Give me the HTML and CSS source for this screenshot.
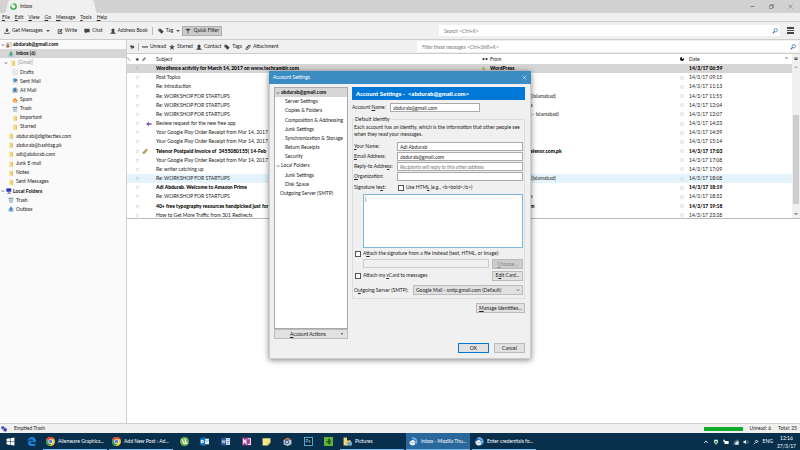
FILE: index.html
```
<!DOCTYPE html>
<html lang="en">
<head>
    <meta charset="utf-8">
    <title>Inbox</title>
    <link rel="stylesheet" href="styles.css">
</head>
<body>
    <svg class="defs">
        <symbol id="folder" viewBox="0 0 12 16"><path d="M1 2h7l1 1h2v12H1z" fill="#f3d67c"/><path d="M1 2h3v13H1z" fill="#fae9ae"/><path d="M9 3h2v12H9z" fill="#dcb95c"/></symbol>
        <symbol id="search" viewBox="0 0 16 16"><circle cx="10" cy="6" r="4.500" fill="none" stroke="#3f74b5" stroke-width="2"/><path d="M7 9l-5 5" stroke="#3f74b5" stroke-width="3"/></symbol>
        <symbol id="trash" viewBox="0 0 16 16"><path d="M3 4h10l-1 11H4z" fill="#cfdde6" stroke="#8195a3"/><path d="M2 2h12v3H2z" fill="#6f98ba"/><path d="M6 7l4 5m0-5l-4 5" stroke="#4d8fc0"/></symbol>
        <symbol id="person" viewBox="0 0 16 16"><path d="M8 1c3 0 4 2 4 5s-1 3-1 5l4 2v2H1v-2l4-2c0-2-1-2-1-5s1-5 4-5z" fill="#444"/></symbol>
        <symbol id="tag" viewBox="0 0 16 16"><path d="M1 2h6l8 7-5 6-9-8z" fill="#444"/><circle cx="4" cy="5" r="1" fill="#fff"/></symbol>
        <symbol id="clip" viewBox="0 0 16 16"><path d="M5 11l6-7c2-2 4 0 3 2l-7 8c-3 3-6 0-4-3l7-8" fill="none" stroke="currentColor" stroke-width="2"/></symbol>
        <symbol id="chrome" viewBox="0 0 16 16"><circle cx="8" cy="8" r="8" fill="#f6c92c"/><path d="M1 4a8 8 0 0 1 14 0H8L5 10z" fill="#de4b3c"/><path d="M1 4l4 7 4 1-2 4A8 8 0 0 1 1 4z" fill="#2f9e55"/><circle cx="8" cy="8" r="4" fill="#fff"/><circle cx="8" cy="8" r="3" fill="#3f82e8"/></symbol>
        <symbol id="thunderbird" viewBox="0 0 16 16"><circle cx="8" cy="8" r="7.500" fill="#2366ad"/><path d="M4 1c6-2 12 3 11 9l-3 4c2-5 0-9-5-10z" fill="#67a9dd"/><path d="M1 8l6-3 5 4-2 5-5 1-4-3z" fill="#f1f4f7"/><path d="M2 9l5 2 4-2" stroke="#7c8e9e" fill="none"/></symbol>
    </svg>

    <header class="titlebar">
        <div class="tab">
            <svg class="icon" viewBox="0 0 16 16"><circle cx="8" cy="8" r="6" fill="none" stroke="#b7e3b7" stroke-width="3"/><path d="M8 2a6 6 0 1 1-6 6" fill="none" stroke="#2fae3a" stroke-width="3"/></svg>
            <span>Inbox</span>
        </div>
        <div class="window-buttons">
            <button aria-label="Minimize"><svg viewBox="0 0 10 10"><path d="M1 5h8" stroke="#333"/></svg></button>
            <button aria-label="Restore"><svg viewBox="0 0 10 10"><path d="M1 3h6v6H1zM3 3V1h6v6H7" fill="none" stroke="#555"/></svg></button>
            <button aria-label="Close"><svg viewBox="0 0 10 10"><path d="M1 1l8 8M9 1L1 9" stroke="#555"/></svg></button>
        </div>
    </header>

    <nav class="menubar">
        <a href="#"><u>F</u>ile</a>
        <a href="#"><u>E</u>dit</a>
        <a href="#"><u>V</u>iew</a>
        <a href="#"><u>G</u>o</a>
        <a href="#"><u>M</u>essage</a>
        <a href="#"><u>T</u>ools</a>
        <a href="#"><u>H</u>elp</a>
    </nav>

    <div class="toolbar">
        <button><svg class="icon" viewBox="0 0 16 16"><path d="M6 1h4v5h3l-5 5-5-5h3zM1 11h2v2h10v-2h2v4H1z" fill="#444"/></svg>Get Messages</button>
        <button class="drop" aria-label="Get messages menu"></button>
        <button><svg class="icon" viewBox="0 0 16 16"><path d="M2 3h7v2H4v8h8V9h2v6H2zM6 9l6-7 3 2-6 7-4 1z" fill="#444"/></svg>Write</button>
        <button><svg class="icon" viewBox="0 0 16 16"><path d="M1 2h14v9H8l-4 4v-4H1z" fill="#444"/></svg>Chat</button>
        <button><svg class="icon"><use href="#person"/></svg>Address Book</button>
        <span class="divider"></span>
        <button><svg class="icon"><use href="#tag"/></svg>Tag</button>
        <button class="drop" aria-label="Tag menu"></button>
        <button class="pressed"><svg class="icon" viewBox="0 0 16 16"><path d="M2 2h12v2L9 8v7H7V8L2 4z" fill="#444"/></svg>Quick Filter</button>
        <label class="search global">
            <input type="text" aria-label="Search" placeholder="Search &lt;Ctrl+K&gt;">
            <svg class="icon"><use href="#search"/></svg>
        </label>
        <button class="burger" aria-label="Menu"></button>
    </div>

    <main class="main">
        <aside class="sidebar">
            <ul class="folders">
                <li class="account"><svg class="chev" viewBox="0 0 8 8"><path d="M1 2l3 4 3-4"/></svg><svg class="icon" viewBox="0 0 16 16"><path d="M3 2h12v10H3z" fill="#e3e3e3" stroke="#999"/><path d="M1 7h7v8H1z" fill="#a8792c"/><path d="M2 7c0-4 5-4 5 0" fill="none" stroke="#6b5230"/></svg>abdurab@gmail.com</li>
                <li class="sub current"><svg class="icon" viewBox="0 0 16 16"><path d="M1 9l3-4h8l3 4v6H1z" fill="#a9c5dd"/><path d="M6 1h4v6h3l-5 6-5-6h3z" fill="#37a84a"/></svg>Inbox (6)</li>
                <li class="label"><svg class="chev" viewBox="0 0 8 8"><path d="M1 2l3 4 3-4"/></svg><svg class="icon"><use href="#folder"/></svg><em>[Gmail]</em></li>
                <li class="deep"><svg class="icon" viewBox="0 0 16 16"><path d="M3 1h7l3 3v11H3z" fill="#fff" stroke="#999"/><path d="M5 7h6M5 10h6" stroke="#aaa"/></svg>Drafts</li>
                <li class="deep"><svg class="icon" viewBox="0 0 16 16"><path d="M1 3h14v12H1z" fill="#d6dfe8"/><path d="M3 1h9l3 6-9 5z" fill="#4b8dc7"/></svg>Sent Mail</li>
                <li class="deep"><svg class="icon" viewBox="0 0 16 16"><path d="M1 5l4-4h7l3 5v9H1z" fill="#9ab3c6"/><path d="M5 3h5l2 6-5 4-3-4z" fill="#3a7db8"/></svg>All Mail</li>
                <li class="deep"><svg class="icon" viewBox="0 0 16 16"><path d="M8 1c1 3 6 4 6 9s-3 5-6 5-6-1-6-5c0-3 2-4 3-6l1 2z" fill="#ee8a2c"/><path d="M6 8h4v5H6z" fill="#fbd28c"/></svg>Spam</li>
                <li class="deep"><svg class="icon"><use href="#trash"/></svg>Trash</li>
                <li class="deep"><svg class="icon"><use href="#folder"/></svg>Important</li>
                <li class="deep"><svg class="icon"><use href="#folder"/></svg>Starred</li>
                <li class="sub"><svg class="icon"><use href="#folder"/></svg>abdurab@digitecties.com</li>
                <li class="sub"><svg class="icon"><use href="#folder"/></svg>abdurab@hashtag.pk</li>
                <li class="sub"><svg class="icon"><use href="#folder"/></svg>adi@abdurab.com</li>
                <li class="sub"><svg class="icon"><use href="#folder"/></svg>Junk E-mail</li>
                <li class="sub"><svg class="icon"><use href="#folder"/></svg>Notes</li>
                <li class="sub"><svg class="icon"><use href="#folder"/></svg>Sent Messages</li>
                <li class="account"><svg class="chev" viewBox="0 0 8 8"><path d="M1 2l3 4 3-4"/></svg><svg class="icon" viewBox="0 0 16 16"><path d="M1 1h13v9H1z" fill="#2638b4"/><path d="M6 10h4v3h3v2H3v-2h3z" fill="#7480a0"/></svg>Local Folders</li>
                <li class="sub"><svg class="icon"><use href="#trash"/></svg>Trash</li>
                <li class="sub"><svg class="icon" viewBox="0 0 16 16"><path d="M1 9l3-4h8l3 4v6H1z" fill="#a9bdd0"/><path d="M8 1l5 6h-3v6H6V7H3z" fill="#3b7fc4"/></svg>Outbox</li>
            </ul>
        </aside>

        <section class="messages">
            <div class="filterbar">
                <button aria-label="Keep filters"><svg class="icon" viewBox="0 0 16 16"><path d="M4 1l5 4 4-1 1 7-4-1-3 5-1-6-5-3 4-1z" fill="#444"/></svg></button>
                <span class="divider"></span>
                <button><svg class="icon" viewBox="0 0 16 16"><path d="M0 6h6l2 1 2-1h6v3h-5l-3 1-3-1H0z" fill="#555"/></svg>Unread</button>
                <button><svg class="icon" viewBox="0 0 16 16"><path d="M8 0l2 6h6l-5 4 2 6-5-4-5 4 2-6-5-4h6z" fill="#444"/></svg>Starred</button>
                <button><svg class="icon"><use href="#person"/></svg>Contact</button>
                <button><svg class="icon"><use href="#tag"/></svg>Tags</button>
                <button><svg class="icon"><use href="#clip"/></svg>Attachment</button>
                <label class="search filter">
                    <input type="text" aria-label="Filter messages" placeholder="Filter these messages &lt;Ctrl+Shift+K&gt;">
                    <svg class="icon"><use href="#search"/></svg>
                </label>
            </div>

            <div class="list">
                <table>
                    <colgroup><col class="c-thread"><col class="c-star"><col class="c-clip"><col class="c-subject"><col class="c-junk"><col class="c-from"><col class="c-read"><col class="c-date"></colgroup>
                    <thead>
                        <tr><th><svg class="small" viewBox="0 0 8 8"><path d="M1 1l2 3 4 3" fill="none" stroke="#333"/></svg></th><th>★</th><th><svg class="small"><use href="#clip"/></svg></th><th>Subject</th><th>••</th><th>From</th><th><svg class="small" viewBox="0 0 8 8"><circle cx="4" cy="4" r="4" fill="#111"/><path d="M4 4V0h4v2z" fill="#fff"/></svg></th><th>Date <span class="sort">^</span></th></tr>
                    </thead>
                    <tbody>
                        <tr class="unread selected"><td></td><td>☆</td><td></td><td>Wordfence activity for March 14, 2017 on www.techrambir.com</td><td><i class="junk"></i></td><td>WordPress</td><td></td><td>14/3/17 06:59</td></tr>
                        <tr><td></td><td>☆</td><td></td><td>Post Topics</td><td></td><td></td><td><i class="dot"></i></td><td>14/3/17 09:15</td></tr>
                        <tr><td></td><td>☆</td><td></td><td>Re: introduction</td><td></td><td></td><td><i class="dot"></i></td><td>14/3/17 11:13</td></tr>
                        <tr><td></td><td>☆</td><td></td><td>Re: WORKSHOP FOR STARTUPS</td><td></td><td>Startup Workshop (Islamabad)</td><td><i class="dot"></i></td><td>14/3/17 11:55</td></tr>
                        <tr><td></td><td>☆</td><td></td><td>Re: WORKSHOP FOR STARTUPS</td><td></td><td>Workshop Sessions</td><td><i class="dot"></i></td><td>14/3/17 12:04</td></tr>
                        <tr><td></td><td>☆</td><td></td><td>Re: WORKSHOP FOR STARTUPS</td><td></td><td>(Startup Workshop - Islamabad)</td><td><i class="dot"></i></td><td>14/3/17 12:07</td></tr>
                        <tr><td></td><td>☆</td><td><svg class="icon reply" viewBox="0 0 16 16"><path d="M0 8l8-6v4h7v4H8v4z" fill="#7b57b8"/></svg></td><td>Review request for the new free app</td><td></td><td></td><td><i class="dot"></i></td><td>14/3/17 14:23</td></tr>
                        <tr><td></td><td>☆</td><td></td><td>Your Google Play Order Receipt from Mar 14, 2017</td><td></td><td></td><td><i class="dot"></i></td><td>14/3/17 14:39</td></tr>
                        <tr><td></td><td>☆</td><td></td><td>Your Google Play Order Receipt from Mar 14, 2017</td><td></td><td></td><td><i class="dot"></i></td><td>14/3/17 15:14</td></tr>
                        <tr class="unread"><td></td><td>☆</td><td><svg class="icon gold" viewBox="0 0 16 16"><path d="M4 11l6-7c2-2 5 0 3 3l-6 7c-3 2-6 0-4-3z" fill="#d9bd74" stroke="#94702a" stroke-width="2"/></svg></td><td>Telenor Postpaid Invoice of&nbsp; 3455080155( 14-Feb</td><td></td><td>postpaid@billing.telenor.com.pk</td><td><i class="dot"></i></td><td>14/3/17 17:03</td></tr>
                        <tr><td></td><td>☆</td><td></td><td>Your Google Play Order Receipt from Mar 14, 2017</td><td></td><td></td><td><i class="dot"></i></td><td>14/3/17 17:08</td></tr>
                        <tr><td></td><td>☆</td><td></td><td>Re: writer catching up</td><td></td><td></td><td><i class="dot"></i></td><td>14/3/17 17:09</td></tr>
                        <tr class="hover"><td></td><td>☆</td><td></td><td>Re: WORKSHOP FOR STARTUPS</td><td></td><td>Startup Workshop (Islamabad)</td><td><i class="dot"></i></td><td>14/3/17 18:08</td></tr>
                        <tr class="unread"><td></td><td>☆</td><td></td><td>Adi Abdurab. Welcome to Amazon Prime</td><td></td><td></td><td><i class="dot"></i></td><td>14/3/17 18:19</td></tr>
                        <tr><td></td><td>☆</td><td></td><td>Re: WORKSHOP FOR STARTUPS</td><td></td><td>Workshop Sessions</td><td><i class="dot"></i></td><td>14/3/17 18:32</td></tr>
                        <tr class="unread"><td></td><td>☆</td><td></td><td>40+ free typography resources handpicked just for you</td><td></td><td>Creative Newsroom</td><td><i class="dot"></i></td><td>14/3/17 19:18</td></tr>
                        <tr><td></td><td>☆</td><td></td><td>How to Get More Traffic from 301 Redirects</td><td></td><td></td><td><i class="dot"></i></td><td>14/3/17 23:28</td></tr>
                    </tbody>
                </table>
                <div class="scroll">
                    <svg class="small" viewBox="0 0 8 8"><path d="M1 1h6v5H1z" fill="#444"/><path d="M2 3h4v1H2z" fill="#fff"/></svg>
                    <svg class="small" viewBox="0 0 8 8"><path d="M1 6l3-3 3 3" fill="none" stroke="#444"/></svg>
                    <span class="thumb"></span>
                    <svg class="small" viewBox="0 0 8 8"><path d="M1 2l3 3 3-3" fill="none" stroke="#444" stroke-width="2"/></svg>
                </div>
            </div>
        </section>

        <form class="dialog">
            <div class="dialog-title">
                <span>Account Settings</span>
                <button type="button" aria-label="Close dialog"><svg viewBox="0 0 10 10"><path d="M1 1l8 8M9 1L1 9" stroke="#fff"/></svg></button>
            </div>
            <div class="dialog-body">
                <div class="side">
                    <ul class="tree">
                        <li class="root current"><svg class="chev" viewBox="0 0 8 8"><path d="M1 2l3 4 3-4"/></svg>abdurab@gmail.com</li>
                        <li>Server Settings</li>
                        <li>Copies &amp; Folders</li>
                        <li>Composition &amp; Addressing</li>
                        <li>Junk Settings</li>
                        <li>Synchronization &amp; Storage</li>
                        <li>Return Receipts</li>
                        <li>Security</li>
                        <li class="root"><svg class="chev" viewBox="0 0 8 8"><path d="M1 2l3 4 3-4"/></svg>Local Folders</li>
                        <li>Junk Settings</li>
                        <li>Disk Space</li>
                        <li class="server">Outgoing Server (SMTP)</li>
                    </ul>
                    <button type="button" class="btn actions"><span><u>A</u>ccount Actions</span><i class="caret"></i></button>
                </div>
                <div class="settings">
                    <h1>Account Settings -&nbsp; &lt;abdurab@gmail.com&gt;</h1>
                    <div class="account-name">
                        <label for="account">Account <u>N</u>ame:</label>
                        <input type="text" id="account" value="abdurab@gmail.com">
                    </div>
                    <fieldset>
                        <legend>Default Identity</legend>
                        <p>Each account has an identity, which is the information that other people see when they read your messages.</p>
                        <div class="fields">
                            <label for="name"><u>Y</u>our Name:</label>
                            <input type="text" id="name" value="Adi Abdurab">
                            <label for="email"><u>E</u>mail Address:</label>
                            <input type="text" id="email" value="abdurab@gmail.com">
                            <label for="reply">Reply-to Addre<u>s</u>s:</label>
                            <input type="text" id="reply" placeholder="Recipients will reply to this other address">
                            <label for="org"><u>O</u>rganization:</label>
                            <input type="text" id="org">
                        </div>
                        <div class="signature-head">
                            <label for="signature">Signature te<u>x</u>t:</label>
                            <input type="checkbox" id="html">
                            <label for="html">Use HTM<u>L</u> (e.g., &lt;b&gt;bold&lt;/b&gt;)</label>
                        </div>
                        <textarea id="signature">|</textarea>
                        <div class="check">
                            <input type="checkbox" id="attach">
                            <label for="attach">A<u>t</u>tach the signature from a file instead (text, HTML, or image):</label>
                        </div>
                        <div class="file">
                            <input type="text" aria-label="Signature file" disabled>
                            <button type="button" class="btn" disabled><u>C</u>hoose...</button>
                        </div>
                        <div class="check vcard">
                            <input type="checkbox" id="vcard">
                            <label for="vcard">Attach my <u>v</u>Card to messages</label>
                            <button type="button" class="btn">E<u>d</u>it Card...</button>
                        </div>
                        <div class="smtp">
                            <label for="smtp">O<u>u</u>tgoing Server (SMTP):</label>
                            <div class="select">
                                <select id="smtp"><option>Google Mail - smtp.gmail.com (Default)</option></select>
                                <svg class="chev" viewBox="0 0 8 8"><path d="M1 2l3 4 3-4"/></svg>
                            </div>
                        </div>
                    </fieldset>
                    <button type="button" class="btn manage"><u>M</u>anage Identities...</button>
                </div>
            </div>
            <div class="dialog-buttons">
                <button type="button" class="btn ok">OK</button>
                <button type="button" class="btn">Cancel</button>
            </div>
        </form>
    </main>

    <footer class="status">
        <svg class="icon" viewBox="0 0 16 16"><path d="M1 1h8v6H1zM7 6h8v7H7z" fill="#2b3fae"/><path d="M3 8h3v2H3zM9 14h5v2H9z" fill="#6b7490"/></svg>
        <span>Emptied Trash</span>
        <span class="progress"></span>
        <span>Unread: 6</span>
        <span>Total: 25</span>
    </footer>

    <div class="taskbar">
        <button class="app" aria-label="Start"><svg viewBox="0 0 16 16"><path d="M1 3l6-1v6H1zM8 2l7-1v7H8zM1 9h6v5l-6-1zM8 9h7v6l-7-1z" fill="#fff"/></svg></button>
        <button class="app" aria-label="Edge"><svg viewBox="0 0 16 16"><path d="M1 8c0-5 4-8 8-8s7 3 7 9H6c0 4 6 4 9 2v4C8 18 1 15 2 10c1-3 3-4 5-5-1 1-1 2-1 2h5c0-4-7-4-10 1z" fill="#1d84dd"/></svg></button>
        <button class="task"><svg><use href="#chrome"/></svg>Alienware Graphics...</button>
        <button class="task"><svg><use href="#chrome"/></svg>Add New Post ‹ Ad...</button>
        <div class="apps">
            <button class="app" aria-label="Torrents"><svg viewBox="0 0 16 16"><circle cx="8" cy="8" r="8" fill="#73b34b"/><path d="M4 4l2 6c1 2 3 2 4 0L9 3M10 9l3 3" fill="none" stroke="#fff" stroke-width="2"/></svg></button>
            <button class="app" aria-label="Outlook"><svg viewBox="0 0 16 16"><path d="M8 3h8v10H8z" fill="#e9f3fb"/><path d="M9 5l3 3 4-3" fill="none" stroke="#1272c4"/><path d="M0 2l9-2v16l-9-2z" fill="#1272c4"/><circle cx="4" cy="8" r="2" fill="none" stroke="#fff" stroke-width="2"/></svg></button>
            <button class="app" aria-label="Word"><svg viewBox="0 0 16 16"><path d="M8 2h8v12H8z" fill="#edf1f8"/><path d="M10 5h5M10 8h5M10 11h5" stroke="#2b579a"/><path d="M0 2l9-2v16l-9-2z" fill="#2b579a"/><path d="M2 5l1 6 2-5 1 5 2-6" fill="none" stroke="#fff"/></svg></button>
            <button class="app" aria-label="OneNote"><svg viewBox="0 0 16 16"><path d="M0 1h16v14H0z" fill="#98408c"/><path d="M10 3h5v10h-5" fill="none" stroke="#f0d8ee" stroke-width="2"/><path d="M3 12V5l4 6V4" fill="none" stroke="#fff" stroke-width="2"/></svg></button>
            <button class="app" aria-label="Notes"><svg viewBox="0 0 16 16"><path d="M1 2h14v8l-5 5H1z" fill="#f8e587"/><path d="M15 10l-5 5v-5z" fill="#c9b24c"/></svg></button>
            <button class="app" aria-label="Viewer"><svg viewBox="0 0 16 16"><path d="M1 5h14v8l-7 3-7-3z" fill="#b9c6d4"/><path d="M2 5c3-5 9-5 12 0z" fill="#cf6f52"/><circle cx="7" cy="9" r="4" fill="#46637e"/><circle cx="7" cy="9" r="2" fill="#dfe9f2"/></svg></button>
            <button class="app" aria-label="Photoshop"><span class="ps">Ps</span></button>
            <button class="app" aria-label="Evernote"><svg viewBox="0 0 16 16"><path d="M0 0h16v16H0z" fill="#5fb336"/><path d="M7 3c3 0 5 1 5 4 0 4-1 6-3 6-2 0-2-2-1-3-2 1-4-1-4-3h3z" fill="#2b5a20"/></svg></button>
        </div>
        <button class="task"><svg viewBox="0 0 16 16"><path d="M1 1h6v14H1z" fill="#f4d77d"/><path d="M5 6h9v9H5z" fill="#e9c765"/><path d="M8 9h8v6H8z" fill="#65a8dc"/></svg>Pictures</button>
        <button class="task active"><svg><use href="#thunderbird"/></svg>Inbox - Mozilla Thu...</button>
        <button class="task"><svg><use href="#thunderbird"/></svg>Enter credentials fo...</button>
        <div class="tray">
            <svg viewBox="0 0 16 16"><path d="M3 11l5-6 5 6" fill="none" stroke="#fff" stroke-width="2"/></svg>
            <svg viewBox="0 0 16 16"><path d="M3 2h10v7l-5 6-5-6z" fill="#e8f5ea"/><path d="M5 5h6v4l-3 4-3-4z" fill="#31a74a"/></svg>
            <svg viewBox="0 0 16 16"><path d="M4 5h11v8H4zM1 2h4v5H1z" fill="#fff"/></svg>
            <svg viewBox="0 0 16 16"><path d="M1 15A14 14 0 0 1 15 1v14z" fill="#60788a"/><path d="M6 15a9 9 0 0 1 9-9v9z" fill="#dde5ea"/></svg>
            <svg viewBox="0 0 16 16"><path d="M1 6h3l4-4v12l-4-4H1z" fill="#fff"/><path d="M10 5q3 3 0 6M12 3q5 5 0 10" fill="none" stroke="#ccd8e0"/></svg>
            <svg viewBox="0 0 16 16"><path d="M2 14l5-5M6 6l4 4 3-3-4-4zM9 3l4 4" fill="none" stroke="#fff" stroke-width="2"/></svg>
            <span>ENG</span>
            <span class="clock">12:16<br>27/3/17</span>
        </div>
    </div>
</body>
</html>
```
FILE: styles.css
```
* {
    box-sizing: border-box;
}
body {
    margin: 0;
    min-height: 100vh;
    display: flex;
    flex-direction: column;
    background: #f0f0f0;
    color: #222;
    font-family: Lato, "Open Sans", sans-serif;
    font-size: 5px;
    line-height: 7px;
}
button, input, select, textarea {
    font: inherit;
    color: inherit;
    margin: 0;
    padding: 0;
    border: 0;
    background: none;
}
button {
    display: flex;
    align-items: center;
    justify-content: center;
    white-space: nowrap;
}
ul {
    list-style: none;
    margin: 0;
    padding: 0;
}
a {
    color: inherit;
    text-decoration: none;
}
.defs {
    display: none;
}
.icon {
    width: 6px;
    height: 6px;
    flex: none;
}
.small {
    width: 4px;
    height: 4px;
    display: block;
}
.chev {
    width: 4px;
    height: 4px;
    flex: none;
    fill: none;
    stroke: #555;
}

/* title bar and menus */
.titlebar {
    height: 13px;
    background: #d2d2d2;
    display: flex;
    justify-content: space-between;
}
.tab {
    width: 94px;
    margin-left: 4px;
    padding-left: 6px;
    display: flex;
    align-items: center;
    gap: 3px;
    background: #f0f0f0;
    clip-path: polygon(0 100%, 2px 90%, 4px 12%, 6px 0, 88px 0, 90px 12%, 92px 90%, 100% 100%);
}
.tab .icon {
    width: 7px;
    height: 7px;
}
.window-buttons {
    display: flex;
}
.window-buttons button {
    width: 19px;
}
.window-buttons svg {
    width: 5px;
    height: 5px;
}
.menubar {
    height: 9px;
    padding-left: 2px;
    display: flex;
    gap: 5px;
    align-items: center;
    border-bottom: 1px solid #d0d0d0;
}
.toolbar {
    height: 18px;
    padding: 0 4px;
    display: flex;
    align-items: center;
    gap: 7px;
    border-bottom: 1px solid #ccc;
}
.toolbar button, .filterbar button {
    gap: 2px;
}
.toolbar .drop {
    border: 2px solid transparent;
    border-top-color: #555;
    border-bottom: 0;
    margin: 0 0 0 -4px;
}
.divider {
    width: 1px;
    height: 8px;
    background: #bbb;
}
.toolbar .divider {
    margin: 0 -2px 0 -3px;
}
.toolbar .pressed {
    width: 40px;
    height: 10px;
    margin-left: -5px;
    background: #cbcbcb;
    border: 1px solid #b0b0b0;
}
.search {
    display: flex;
    align-items: center;
    background: #fff;
    padding: 0 2px 0 3px;
    height: 11px;
    font-style: italic;
}
.search input {
    flex: 1;
    min-width: 0;
    outline: 0;
}
::placeholder {
    color: #777;
    opacity: 1;
}
.global {
    flex: 0 0 341px;
    margin-left: auto;
}
.toolbar .burger {
    width: 7px;
    height: 7px;
    border: solid #444;
    border-width: 2px 0;
    background: linear-gradient(#f0f0f0 1px, #444 1px 2px, #f0f0f0 2px);
    margin-right: 2px;
}

/* folders and message list */
.main {
    flex: 1;
    display: flex;
    position: relative;
}
.sidebar {
    flex: none;
    width: 126px;
    background: #fafafa;
}
.folders {
    height: 174px;
    display: grid;
    grid-auto-rows: 1fr;
}
.folders li {
    display: flex;
    align-items: center;
    gap: 2px;
    white-space: nowrap;
}
.folders .account {
    padding-left: 1px;
    font-weight: 900;
    gap: 1px;
}
.folders .sub {
    padding-left: 8px;
}
.folders .label {
    padding-left: 4px;
    color: #999;
}
.folders .deep {
    padding-left: 12px;
}
.current {
    background: #d6d6d6;
    font-weight: 900;
}
.messages {
    flex: 1;
    min-width: 0;
    border-left: 1px solid #d0d0d0;
    background: #fff;
}
.filterbar {
    height: 14px;
    padding: 0 2px;
    display: flex;
    align-items: center;
    gap: 3px;
    background: #f0f0f0;
    border-bottom: 1px solid #ccc;
}
.filter {
    flex: 0 0 381px;
    margin-left: auto;
}
.list {
    height: 165px;
    display: flex;
    overflow: hidden;
    border-bottom: 1px solid #bbb;
}
.list table {
    flex: 1;
    width: 100%;
    height: 166px;
    table-layout: fixed;
    border-collapse: collapse;
}
.c-thread { width: 5px; }
.c-star { width: 10px; }
.c-clip { width: 10px; }
.c-subject { width: 330px; }
.c-junk { width: 8px; }
.c-read { width: 9px; }
.c-date { width: 103px; }
.list th {
    height: 10px;
    padding: 0;
    text-align: left;
    font-weight: normal;
}
.list td {
    height: 9px;
    padding: 0;
    line-height: 7px;
    overflow: hidden;
    white-space: nowrap;
}
.list td:nth-child(2), .list th:nth-child(2) {
    text-align: center;
}
.list td:nth-child(2) {
    color: #999;
    font-weight: normal;
}
.list td:nth-child(4), .list th:nth-child(4) {
    padding-left: 4px;
}
.list th:last-child {
    position: relative;
}
.sort {
    position: absolute;
    right: 4px;
}
.unread {
    font-weight: 900;
    color: #000;
}
.selected {
    background: #d6d6d6;
}
.hover {
    background: #e5f3fc;
}
.gold {
    display: block;
}
.reply {
    display: block;
    margin-left: auto;
}
.junk {
    display: block;
    width: 3px;
    height: 3px;
    border-radius: 50%;
    background: #a9b84a;
}
.dot {
    display: block;
    width: 4px;
    height: 4px;
    border-radius: 50%;
    border: 1px solid #ddd;
}
.scroll {
    width: 8px;
    background: #f0f0f0;
    display: flex;
    flex-direction: column;
    align-items: center;
    padding: 3px 0 2px;
}
.scroll svg {
    flex: none;
}
.scroll svg:nth-child(2) {
    margin: 4px 0 46px;
}
.thumb {
    width: 6px;
    height: 89px;
    margin-bottom: auto;
    background: #cdcdcd;
}

/* account settings dialog */
.dialog {
    position: absolute;
    top: 31px;
    left: calc(50% - 131px);
    width: 262px;
    background: #f0f0f0;
    border: 1px solid #ccc;
    border-top: 0;
    box-shadow: 0 1px 6px rgba(0, 0, 0, 0.5);
}
.dialog-title {
    height: 13px;
    margin: 0 -1px;
    padding: 0 4px;
    display: flex;
    align-items: center;
    justify-content: space-between;
    background: #3c8cc4;
    color: #fff;
}
.dialog-title svg {
    width: 5px;
    height: 5px;
}
.dialog-body {
    display: flex;
    gap: 4px;
    padding: 3px 5px 0 4px;
}
.side {
    width: 74px;
    flex: none;
}
.tree {
    height: 242px;
    padding-bottom: 130px;
    display: grid;
    grid-auto-rows: 1fr;
    background: #fff;
    border: 1px solid #aaa;
}
.tree li {
    display: flex;
    align-items: center;
    padding-left: 10px;
    white-space: nowrap;
}
.tree .root {
    padding-left: 1px;
    gap: 1px;
}
.tree .server {
    padding-left: 5px;
}
.btn {
    height: 10px;
    padding: 0 2px;
    background: #e1e1e1;
    border: 1px solid #bbb;
}
.btn:disabled {
    background: #ccc;
    color: #888;
}
.actions {
    width: 100%;
    justify-content: space-between;
    padding-left: 15px;
    padding-right: 4px;
}
.caret {
    border: 1px solid transparent;
    border-top: 2px solid #444;
    border-bottom: 0;
}
.settings {
    flex: 1;
    min-width: 0;
    display: flex;
    flex-direction: column;
}
.settings h1 {
    height: 13px;
    margin: 0 0 3px;
    padding-left: 4px;
    line-height: 13px;
    font-size: 6px;
    font-weight: 900;
    background: #0078d7;
    color: #fff;
}
.account-name {
    display: flex;
    align-items: center;
    justify-content: space-between;
    padding-right: 45px;
}
input[type="text"] {
    height: 9px;
    padding: 0 2px;
    background: #fff;
}
.settings input[type="text"] {
    border: 1px solid #aaa;
}
.account-name input {
    width: 90px;
}
fieldset {
    margin: 4px 0 0;
    padding: 1px 1px 3px;
    border: 1px solid #ddd;
    min-width: 0;
}
legend {
    padding: 0 1px;
}
fieldset p {
    margin: 0 0 4px;
}
.fields {
    display: grid;
    grid-template-columns: 43px 1fr;
    row-gap: 1px;
    align-items: center;
}
.fields label {
    white-space: nowrap;
}
#reply {
    font-style: italic;
}
.signature-head {
    display: flex;
    align-items: center;
    gap: 2px;
    height: 13px;
}
.signature-head label:first-child {
    width: 42px;
}
input[type="checkbox"] {
    appearance: none;
    width: 6px;
    height: 6px;
    background: #fff;
    border: 1px solid #555;
    flex: none;
}
textarea {
    display: block;
    width: calc(100% - 9px);
    height: 54px;
    margin-left: 9px;
    padding: 1px;
    background: #fff;
    border: 1px solid #7ab8e0;
    resize: none;
}
.check {
    display: flex;
    align-items: center;
    gap: 2px;
    height: 11px;
    padding-left: 1px;
    white-space: nowrap;
}
.file {
    display: flex;
    gap: 3px;
    padding-left: 9px;
}
.file input[type="text"] {
    flex: 1;
    background: #f0f0f0;
    border-color: #ccc;
}
.file .btn, .vcard .btn {
    width: 31px;
}
.vcard {
    margin: 1px 0 4px;
}
.vcard .btn {
    margin-left: auto;
}
.smtp {
    display: flex;
    align-items: center;
    justify-content: space-between;
    white-space: nowrap;
}
.select {
    display: flex;
    align-items: center;
    width: 110px;
    height: 10px;
    padding: 0 2px;
    background: #e1e1e1;
    border: 1px solid #bbb;
}
.select select {
    appearance: none;
    flex: 1;
    min-width: 0;
}
.manage {
    align-self: flex-end;
    width: 49px;
    margin-top: 4px;
}
.dialog-buttons {
    display: flex;
    justify-content: flex-end;
    gap: 5px;
    padding: 4px 5px 5px;
}
.dialog-buttons .btn {
    width: 31px;
}
.ok {
    border: 1px solid #0078d7;
}

/* status line and taskbar */
.status {
    height: 10px;
    padding: 0 3px 0 1px;
    display: flex;
    align-items: center;
    gap: 7px;
    border-top: 1px solid #d0d0d0;
}
.progress {
    width: 39px;
    height: 4px;
    margin-left: auto;
    background: #12ac2c;
}
.taskbar {
    height: 17px;
    display: flex;
    background: #08304c;
    color: #fff;
}
.taskbar svg {
    width: 9px;
    height: 9px;
    flex: none;
}
.app {
    width: 21px;
}
.apps {
    width: 165px;
    display: flex;
}
.apps .app {
    flex: 1;
}
.task {
    width: 64px;
    margin: 0 1px;
    padding-left: 3px;
    justify-content: flex-start;
    gap: 3px;
    border-bottom: 1px solid #76b9ed;
}
.active {
    background: #2a689c;
}
.ps {
    width: 9px;
    height: 9px;
    border: 1px solid #4ca9d8;
    background: #0b1c2b;
    color: #8fd0f5;
    line-height: 7px;
}
.tray {
    margin-left: auto;
    padding-right: 4px;
    display: flex;
    align-items: center;
    gap: 4px;
}
.tray svg {
    width: 6px;
    height: 6px;
}
.clock {
    text-align: center;
    line-height: 8px;
}
```
